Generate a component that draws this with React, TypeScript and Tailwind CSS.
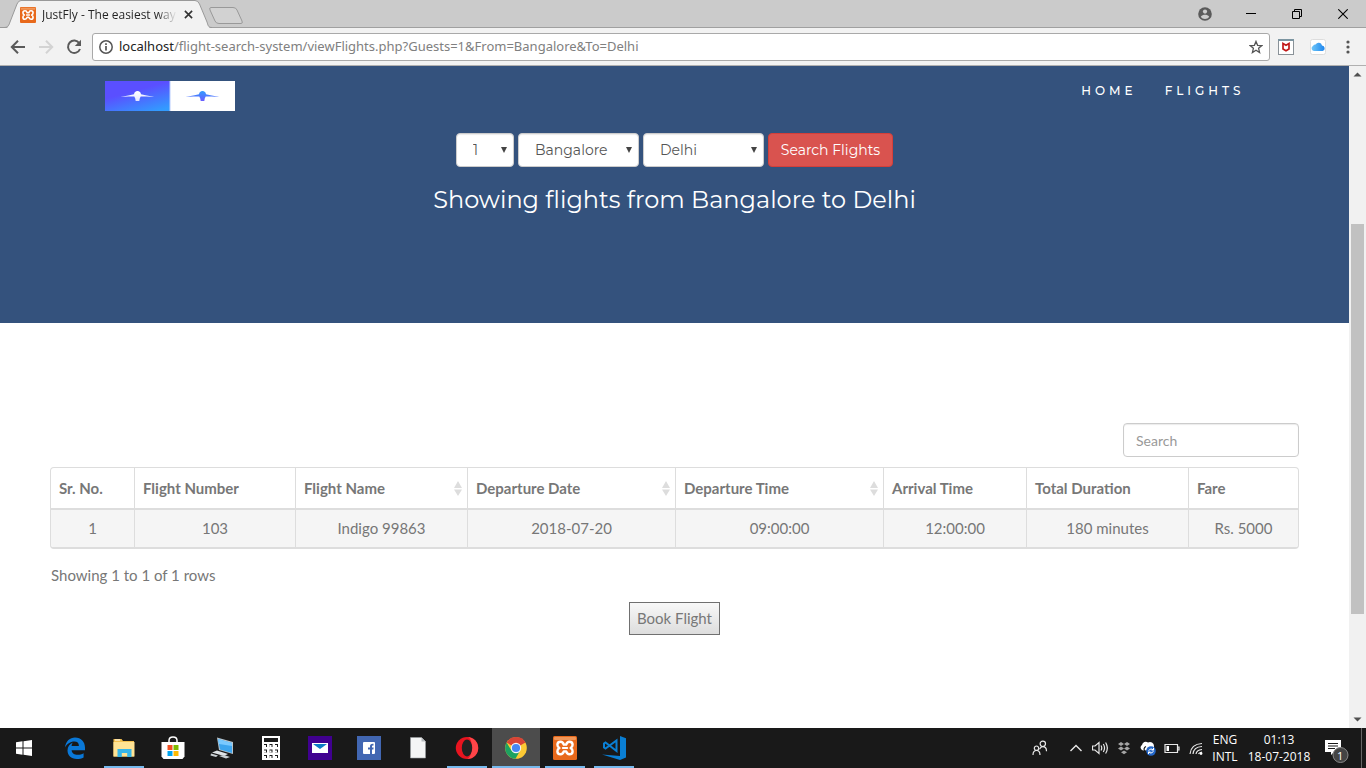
import React, { useState } from "react";
import type { ReactNode } from "react";

const HEAD = "font-['Montserrat','Inter',sans-serif]";

function XamppIcon({ className }: { className: string }) {
  return (
    <svg viewBox="0 0 24 24" className={className} aria-hidden="true">
      <rect width="24" height="24" rx="1.5" fill="#e8691b" />
      <rect x="1" y="1" width="22" height="3" rx="1" fill="#f0975a" />
      <path
        d="M7.600 5.700C9.500 5.700 10.300 7 10.800 8.600H13.200C13.700 7 14.500 5.700 16.400 5.700C18.300 5.700 19.600 7 19.600 8.800C19.600 10.300 18.700 11.400 17.600 12C18.700 12.600 19.600 13.700 19.600 15.200C19.600 17 18.300 18.300 16.400 18.300C14.500 18.300 13.700 17 13.200 15.400H10.800C10.300 17 9.500 18.300 7.600 18.300C5.700 18.300 4.400 17 4.400 15.200C4.400 13.700 5.300 12.600 6.400 12C5.300 11.400 4.400 10.300 4.400 8.800C4.400 7 5.700 5.700 7.600 5.700z"
        fill="none"
        stroke="#fff"
        strokeWidth="2.400"
        strokeLinejoin="round"
      />
      <path d="M9.800 12h4.400" stroke="#fff" strokeWidth="2" strokeLinecap="round" />
    </svg>
  );
}

function WindowButton({ label, children }: { label: string; children: ReactNode }) {
  return (
    <button aria-label={label} className="flex h-7 w-[46px] items-center justify-center text-black">
      {children}
    </button>
  );
}

function TabStrip() {
  return (
    <header className="flex h-7 shrink-0 items-start bg-[#cbcbcb] shadow-[inset_0_-1px_0_#a0a0a0]">
      <div className="relative h-7 w-[212px] shrink-0">
        <svg viewBox="0 0 212 28" className="absolute inset-0 h-7 w-[212px]" aria-hidden="true">
          <path d="M5 28.500C9 28 9 25 10 22L17 4Q18.500.500 21 .500H195Q198 .500 199.500 4L207 22C208 25 208 28 212 28.500z" fill="#f2f2f2" />
          <path d="M0 27.500H4C8 27.500 9 25 10 22L17 4Q18.500.500 21 .500H195Q198 .500 199.500 4L207 22C208 25 208 27.500 212 27.500" fill="none" stroke="#999" />
        </svg>
        <div className="relative flex h-7 items-center pt-px pl-5 pr-4">
          <XamppIcon className="h-4 w-4 shrink-0" />
          <span className="ml-[6px] w-[136px] overflow-hidden bg-linear-to-r from-[#222] from-85% to-transparent bg-clip-text font-['Segoe_UI','Open_Sans',sans-serif] text-xs whitespace-nowrap text-transparent">
            JustFly - The easiest way t
          </span>
          <button aria-label="Close tab" className="flex h-4 w-4 items-center justify-center ml-[3px]">
            <svg viewBox="0 0 10 10" className="h-[9px] w-[9px]">
              <path d="M1 1l8 8M9 1l-8 8" stroke="#333" strokeWidth="1.800" />
            </svg>
          </button>
        </div>
      </div>
      <button aria-label="New tab" className="-ml-1 mt-[6px]">
        <svg viewBox="0 0 36 19" className="h-[19px] w-9">
          <path d="M3 1.500H25Q28 1.500 29 4L34 15Q35 17.500 33 17.500H11Q8 17.500 7 15L2 4Q1 1.500 3 1.500z" fill="#d2d2d2" stroke="#999" />
        </svg>
      </button>
      <div className="ml-auto flex">
        <WindowButton label="Profile">
          <svg viewBox="0 0 14 14" className="h-[14px] w-[14px]">
            <circle cx="7" cy="7" r="6.800" fill="#5a5a5a" />
            <circle cx="7" cy="4.600" r="2.100" fill="#cbcbcb" />
            <path d="M2.800 9.800C3.800 8.300 5.400 7.800 7 7.800s3.200.5 4.200 2C10.200 11.300 8.700 12 7 12s-3.200-.7-4.200-2.200z" fill="#cbcbcb" />
          </svg>
        </WindowButton>
        <WindowButton label="Minimise">
          <svg viewBox="0 0 10 10" className="h-[10px] w-[10px]">
            <path d="M0 4.500h10" stroke="#000" />
          </svg>
        </WindowButton>
        <WindowButton label="Restore">
          <svg viewBox="0 0 10 10" className="h-[10px] w-[10px]">
            <path d="M.5 2.500h7v7h-7zM2.500 2.500v-2h7v7h-2" fill="none" stroke="#000" />
          </svg>
        </WindowButton>
        <WindowButton label="Close">
          <svg viewBox="0 0 10 10" className="h-[10px] w-[10px]">
            <path d="M.3.300l9.400 9.400M9.700.300L.3 9.700" stroke="#000" strokeWidth="1.100" />
          </svg>
        </WindowButton>
      </div>
    </header>
  );
}

function Toolbar() {
  return (
    <div className="flex h-[38px] shrink-0 items-center border-b border-[#b0b0b0] bg-[#f2f2f2] px-[10px]">
      <button aria-label="Back" className="mr-3 h-4 w-4">
        <svg viewBox="0 0 16 16" className="h-4 w-4" fill="none" stroke="#5a5a5a" strokeWidth="2">
          <path d="M15 8H2M8 1.800L1.800 8 8 14.200" />
        </svg>
      </button>
      <button aria-label="Forward" className="mr-3 h-4 w-4">
        <svg viewBox="0 0 16 16" className="h-4 w-4" fill="none" stroke="#d3d3d3" strokeWidth="2">
          <path d="M1 8h13M8 1.800L14.200 8 8 14.200" />
        </svg>
      </button>
      <button aria-label="Reload" className="mr-[10px] h-4 w-4">
        <svg viewBox="0 0 16 16" className="h-4 w-4">
          <path d="M13.300 4.200A6.200 6.200 0 1 0 14 10" fill="none" stroke="#5a5a5a" strokeWidth="2" />
          <path d="M15 .800V7H8.800z" fill="#5a5a5a" />
        </svg>
      </button>
      <div className="flex h-7 flex-1 items-center rounded-[3px] border border-[#a9a9a9] bg-white px-[6px]">
        <svg viewBox="0 0 14 14" className="mr-[6px] h-[14px] w-[14px]" aria-hidden="true">
          <circle cx="7" cy="7" r="6.200" fill="none" stroke="#555" strokeWidth="1.500" />
          <path d="M7 6v4.600M7 3.300v1.700" stroke="#555" strokeWidth="1.700" />
        </svg>
        <a
          href="#top"
          className="font-['Segoe_UI','Noto_Sans',sans-serif] text-[13px] whitespace-nowrap text-[#808080]"
        >
          <span className="text-[#222]">localhost</span>
          /flight-search-system/viewFlights.php?Guests=1&amp;From=Bangalore&amp;To=Delhi
        </a>
        <button aria-label="Bookmark" className="ml-auto h-[14px] w-[14px]">
          <svg viewBox="0 0 14 14" className="h-[14px] w-[14px]">
            <path d="M7 1.400l1.600 3.900 4.200.3-3.200 2.700 1 4.200L7 10.200l-3.600 2.300 1-4.200L1.200 5.600l4.200-.3z" fill="none" stroke="#555" strokeWidth="1.300" />
          </svg>
        </button>
      </div>
      <button aria-label="McAfee" className="ml-2 h-4 w-4">
        <svg viewBox="0 0 16 16" className="h-4 w-4">
          <rect x=".5" y=".5" width="15" height="15" fill="#fff" stroke="#8a9298" />
          <path d="M0 0h16v2H0z" fill="#7c95a1" />
          <path d="M5 4.500v5.500l3 1.800 3-1.800V4.500L8 6.300z" fill="none" stroke="#c01818" strokeWidth="1.700" />
        </svg>
      </button>
      <button aria-label="iCloud" className="ml-4 h-4 w-4">
        <svg viewBox="0 0 16 16" className="h-4 w-4">
          <defs>
            <linearGradient id="cloud" x1="0" x2="1">
              <stop stopColor="#6ec6f8" />
              <stop offset="1" stopColor="#1e86ee" />
            </linearGradient>
          </defs>
          <rect x=".5" y=".5" width="15" height="15" rx="2" fill="#fff" stroke="#ddd" />
          <path d="M3.800 12a2.600 2.600 0 0 1-.8-4.900A2.300 2.300 0 0 1 5.600 5.500 3.500 3.500 0 0 1 12 6.500a2.800 2.800 0 0 1 .6 5.500z" fill="url(#cloud)" />
        </svg>
      </button>
      <button aria-label="Menu" className="ml-[14px] flex h-4 w-4 items-center justify-center">
        <svg viewBox="0 0 4 14" className="h-[14px] w-1" fill="#555">
          <circle cx="2" cy="2" r="1.600" />
          <circle cx="2" cy="7" r="1.600" />
          <circle cx="2" cy="12" r="1.600" />
        </svg>
      </button>
    </div>
  );
}

function Bird({ id, x, from, to }: { id: string; x: number; from: string; to: string }) {
  return (
    <g transform={`translate(${x} 0)`}>
      <defs>
        <linearGradient id={id} x1="0" x2="0" y1="0" y2="1">
          <stop stopColor={from} />
          <stop offset="1" stopColor={to} />
        </linearGradient>
      </defs>
      <path
        d="M-17 16L-8 14.200L-3.500 13.200Q-3 10.200 0 10Q3 10.200 3.500 13.200L8 14.200L17 16L9 15.600L3.200 15.500Q2 17 1.800 20H-1.800Q-2 17-3.200 15.500L-9 15.600z"
        fill={`url(#${id})`}
      />
    </g>
  );
}

function Logo() {
  return (
    <svg viewBox="0 0 130 30" className="h-[30px] w-[130px]" role="img" aria-label="JustFly">
      <defs>
        <linearGradient id="logo-bg" x1=".2" y1="0" x2=".8" y2="1">
          <stop offset=".35" stopColor="#5a4fff" />
          <stop offset="1" stopColor="#329bff" />
        </linearGradient>
      </defs>
      <rect width="65" height="30" fill="url(#logo-bg)" />
      <rect x="65" width="65" height="30" fill="#fff" />
      <path d="M65 0v30" stroke="#b9cdfd" />
      <Bird id="bird-a" x={32.5} from="#ffffff" to="#e6e5ff" />
      <Bird id="bird-b" x={97.5} from="#329bff" to="#6a5cff" />
    </svg>
  );
}

function Picker({ label, options, size }: { label: string; options: string[]; size: string }) {
  return (
    <div className={`relative ${size}`}>
      <select
        aria-label={label}
        className="h-[34px] w-full appearance-none rounded-sm border border-[#ccc] bg-white pr-6 pl-4 text-sm text-[#555] shadow-[inset_0_1px_1px_rgba(0,0,0,0.08)]"
      >
        {options.map((o) => (
          <option key={o}>{o}</option>
        ))}
      </select>
      <svg viewBox="0 0 6 6" className="pointer-events-none absolute top-[14px] right-[7px] h-[6px] w-[6px]">
        <path d="M0 0h6L3 6z" fill="#444" />
      </svg>
    </div>
  );
}

function Hero() {
  return (
    <section className={`bg-[#34527d] pb-[107px] text-white ${HEAD}`}>
      <nav className="mx-auto flex max-w-[1170px] items-start justify-between px-[15px] pt-[15px]">
        <a href="#home">
          <Logo />
        </a>
        <div className="flex gap-7 text-xs leading-5 font-medium tracking-[4px]">
          <a href="#home">HOME</a>
          <a href="#flights">FLIGHTS</a>
        </div>
      </nav>
      <form className="mt-[22px] flex justify-center gap-1" onSubmit={(e) => e.preventDefault()}>
        <Picker label="Guests" options={["1", "2", "3"]} size="w-[58px]" />
        <Picker label="From" options={["Bangalore", "Delhi"]} size="w-[121px]" />
        <Picker label="To" options={["Delhi", "Bangalore"]} size="w-[121px]" />
        <button className="h-[34px] w-[125px] rounded-sm border border-[#d43f3a] bg-[#d9534f] text-sm whitespace-nowrap">
          Search Flights
        </button>
      </form>
      <h1 className="mt-4 text-center text-2xl leading-[33px]">Showing flights from Bangalore to Delhi</h1>
    </section>
  );
}

const COLUMNS = [
  { title: "Sr. No.", value: "1", width: "w-[84px]" },
  { title: "Flight Number", value: "103", width: "w-[161px]" },
  { title: "Flight Name", value: "Indigo 99863", width: "w-[172px]", sort: true },
  { title: "Departure Date", value: "2018-07-20", width: "w-[208px]", sort: true },
  { title: "Departure Time", value: "09:00:00", width: "w-[208px]", sort: true },
  { title: "Arrival Time", value: "12:00:00", width: "w-[143px]" },
  { title: "Total Duration", value: "180 minutes", width: "w-[162px]" },
  { title: "Fare", value: "Rs. 5000", width: "w-[109px]" },
];

function Results() {
  const [query, setQuery] = useState("");
  return (
    <section className="flex flex-col px-[50px] pt-[100px] font-['Lato',sans-serif] text-[15px] text-[#777]">
      <input
        aria-label="Search"
        placeholder="Search"
        value={query}
        onChange={(e) => setQuery(e.target.value)}
        className="h-[34px] w-44 self-end rounded-sm border border-[#ccc] px-3 text-sm shadow-[inset_0_1px_1px_rgba(0,0,0,0.08)] placeholder:text-[#999]"
      />
      <div className="mt-[10px] overflow-hidden rounded-sm border border-b-2 border-[#ddd]">
        <table className="w-full table-fixed border-separate border-spacing-0">
          <thead>
            <tr>
              {COLUMNS.map((c) => (
                <th
                  key={c.title}
                  className={`h-[42px] border-r border-b-2 border-[#ddd] px-2 text-left font-bold last:border-r-0 ${c.width}`}
                >
                  <div className="-mr-[3px] flex items-center justify-between whitespace-nowrap">
                    {c.title}
                    {c.sort && (
                      <svg viewBox="0 0 8 15" className="h-[15px] w-2" fill="#ddd" aria-hidden="true">
                        <path d="M4 0l4 7H0zM0 8.500h8L4 15z" />
                      </svg>
                    )}
                  </div>
                </th>
              ))}
            </tr>
          </thead>
          <tbody>
            <tr className="bg-[#f5f5f5]">
              {COLUMNS.map((c) => (
                <td key={c.title} className="h-[37px] border-r border-[#ddd] px-2 text-center last:border-r-0">
                  {c.value}
                </td>
              ))}
            </tr>
          </tbody>
        </table>
      </div>
      <p className="mt-4 pl-px leading-5">Showing 1 to 1 of 1 rows</p>
      <button className="mt-[17px] h-[33px] self-center border border-[#707070] bg-linear-to-b from-[#f8f8f8] to-[#dddddd] px-[7px]">
        Book Flight
      </button>
    </section>
  );
}

function Scrollbar() {
  return (
    <div className="flex w-[17px] shrink-0 flex-col items-center bg-[#f1f1f1]" aria-hidden="true">
      <svg viewBox="0 0 17 17" className="h-[17px] w-[17px] shrink-0">
        <path d="M8.500 6.500l4 4h-8z" fill="#505050" />
      </svg>
      <div className="grow-[141]" />
      <div className="w-[13px] grow-[390] bg-[#c1c1c1]" />
      <div className="grow-[97]" />
      <svg viewBox="0 0 17 17" className="h-[17px] w-[17px] shrink-0">
        <path d="M8.500 10.500l4-4h-8z" fill="#505050" />
      </svg>
    </div>
  );
}

const APPS: { name: string; bar?: boolean; active?: boolean; icon: ReactNode }[] = [
  {
    name: "Edge",
    icon: (
      <path
        d="M2 11.500C2.800 5 7 1.500 12 1.500c6.200 0 10 4.500 10 10v2.700H8.600c.2 3.200 3 4.600 6 4.600 2.300 0 4.300-.6 6-1.600v4.200c-2 1-4.200 1.500-6.700 1.500-6 0-9.400-3.700-9.400-8.500 0-3.700 2.200-6.500 5.600-7.800C8.900 7.700 8.700 9 8.600 10h7.300c0-2.900-1.600-4.400-4.600-4.400C7.300 5.600 4 8.200 2 11.500z"
        fill="#0a78d7"
      />
    ),
  },
  {
    name: "File Explorer",
    bar: true,
    icon: (
      <>
        <path d="M1.500 3h8l1.500 2h11v15.500H1.500z" fill="#f3c04f" />
        <path d="M1.500 6h21v14.500h-21z" fill="#ffe394" />
        <path d="M3 4h5" stroke="#fff" strokeWidth="1" />
        <path d="M5.500 21v-8h14v8h-4.300v-4h-5.400v4z" fill="#38b6e8" />
      </>
    ),
  },
  {
    name: "Store",
    icon: (
      <>
        <path d="M8 7V4.500C8 1.500 10 1 12 1s4 .5 4 3.500V7" fill="none" stroke="#fff" strokeWidth="1.500" />
        <path d="M.5 6h23v14.500l-2 2.500h-19l-2-2.500z" fill="#fff" />
        <path d="M6.500 9h5v5h-5z" fill="#f25022" />
        <path d="M12.500 9h5v5h-5z" fill="#7fba00" />
        <path d="M6.500 15h5v5h-5z" fill="#00a4ef" />
        <path d="M12.500 15h5v5h-5z" fill="#ffb900" />
      </>
    ),
  },
  {
    name: "This PC",
    icon: (
      <>
        <path d="M7 1.500l16 4.500v12L9 14z" fill="#b8c4cc" />
        <path d="M8 3l14 4v10L10 13.500z" fill="#3da5ee" />
        <path d="M8 3l14 4v3L9 8z" fill="#79c9ff" />
        <path d="M7 14.500l11 3.500-4 2-12-3.500z" fill="#dfe3e6" />
        <path d="M1 17.500l7 2-2 1.500-5.500-1.500zM9 20l5-1 6 2-4 1.500z" fill="#c9cfd3" />
      </>
    ),
  },
  {
    name: "Calculator",
    icon: (
      <>
        <path d="M3 0h18v24H3z" fill="#fff" />
        <path d="M5 2h14v4H5zM5 8h3v3H5zM10.500 8h3v3h-3zM16 8h3v3h-3zM5 13.500h3v3H5zM10.500 13.500h3v3h-3zM16 13.500h3v3h-3zM5 19h3v3H5zM10.500 19h3v3h-3zM16 19h3v3h-3z" fill="#1a1a1a" />
        <path d="M5 9h2v2H5zM10.500 9h2v2h-2zM16 9h2v2h-2zM5 14.500h2v2H5zM10.500 14.500h2v2h-2zM16 14.500h2v2h-2zM5 20h2v2H5zM10.500 20h2v2h-2zM16 20h2v2h-2z" fill="#fff" />
      </>
    ),
  },
  {
    name: "Mail",
    icon: (
      <>
        <path d="M0 0h24v24H0z" fill="#400090" />
        <path d="M4 7h16v10H4z" fill="#fff" />
        <path d="M5 8h14l-7 5z" fill="#0a7cc4" />
      </>
    ),
  },
  {
    name: "Facebook",
    icon: (
      <>
        <path d="M0 0h24v24H0z" fill="#4267b2" />
        <rect x="6" y="6" width="12" height="12" rx="1" fill="#fff" />
        <path d="M13 18v-4.500h-2V11.500h2V10.300C13 8.500 14 7.600 16.500 7.800V9.600C15.300 9.500 15 9.800 15 10.600v.9h1.600l-.2 2H15V18z" fill="#4267b2" />
      </>
    ),
  },
  {
    name: "Document",
    icon: (
      <>
        <path d="M4.500 1.500h11l4 4v16.500h-15z" fill="#f4f5f5" stroke="#9aa0a3" strokeWidth=".600" />
        <path d="M15.500 1.500v4h4z" fill="#b5babd" />
      </>
    ),
  },
  {
    name: "Opera",
    bar: true,
    icon: (
      <>
        <ellipse cx="12" cy="12" rx="11.200" ry="11" fill="#e8141f" />
        <path d="M12 1c7 0 11.200 5 11.200 11S19 23 12 23c6-1 7-22 0-22z" fill="#ff4548" />
        <ellipse cx="12" cy="12" rx="5.200" ry="8.500" fill="#222" />
      </>
    ),
  },
  {
    name: "Chrome",
    bar: true,
    active: true,
    icon: (
      <>
        <circle cx="12" cy="12" r="10.800" fill="#fcc934" />
        <path d="M12 12L2.600 6.600A10.800 10.800 0 0 1 21.400 6.600z" fill="#d84437" />
        <path d="M12 12L7.500 14.600 2.600 6.600A10.800 10.800 0 0 0 11.500 22.800l4.500-8z" fill="#1da261" />
        <path d="M12 7h9.600L21.300 6.500 12 4z" fill="#d84437" />
        <circle cx="12" cy="12" r="5.200" fill="#f5f5f5" />
        <circle cx="12" cy="12" r="4.100" fill="#4587f3" />
      </>
    ),
  },
  { name: "XAMPP", bar: true, icon: null },
  {
    name: "Visual Studio Code",
    bar: true,
    icon: (
      <>
        <path d="M18 0l6 2.300v19.200L18 24 0 18.500l18 1.500z" fill="#0a7fd4" />
        <path d="M14.500 4.500v10.500L3.500 6.500 2 7.500v4l1.500 1z" fill="none" stroke="#0a7fd4" strokeWidth="2" />
      </>
    ),
  },
];

function TrayIcon({ label, children }: { label: string; children: ReactNode }) {
  return (
    <button aria-label={label} className="flex h-10 w-6 items-center justify-center">
      <svg viewBox="0 0 16 16" className="h-4 w-4" fill="none" stroke="#e8e8e8" strokeWidth="1.200">
        {children}
      </svg>
    </button>
  );
}

function Taskbar() {
  return (
    <footer className="flex h-10 shrink-0 items-stretch bg-[#191919] font-['Segoe_UI','Open_Sans',sans-serif] text-xs text-white">
      <button aria-label="Start" className="mr-[3px] flex w-12 items-center justify-center">
        <svg viewBox="0 0 16 16" className="h-4 w-4" fill="#fff">
          <path d="M0 2.200L6.500 1.300V7.500H0zM7.500 1.200L16 0v7.500H7.500zM0 8.500h6.500v6.200L0 13.800zM7.500 8.500H16V16l-8.500-1.200z" />
        </svg>
      </button>
      <div className="flex gap-px">
        {APPS.map((a) => (
          <button
            key={a.name}
            aria-label={a.name}
            className={`flex w-12 flex-col items-center justify-between pt-2 ${a.active ? "bg-[#4c4c4c]" : ""}`}
          >
            {a.icon ? (
              <svg viewBox="0 0 24 24" className="h-6 w-6">
                {a.icon}
              </svg>
            ) : (
              <XamppIcon className="h-6 w-6" />
            )}
            {a.bar && <span className={`h-[2px] bg-[#76b9ed] ${a.active ? "w-12" : "w-10"}`} />}
          </button>
        ))}
      </div>
      <div className="ml-auto flex items-center">
        <div className="mr-3">
          <TrayIcon label="People">
            <circle cx="10.800" cy="3.800" r="2.700" />
            <circle cx="4.500" cy="8.200" r="2.200" />
            <path d="M1 15c0-3 1.500-4.500 3.500-4.500S8 12 8 15M7.500 9.200c.8-1.600 1.900-2.500 3.300-2.500 2.200 0 3.700 1.500 3.700 4.500" />
          </TrayIcon>
        </div>
        <TrayIcon label="Show hidden icons">
          <path d="M2.500 11L8 5.500l5.500 5.500" strokeWidth="1.400" />
        </TrayIcon>
        <TrayIcon label="Volume">
          <path d="M.5 6h2.500l4-3.500v11L3 10H.5zM9 5.500q1.500 2.500 0 5M11.300 4q2.500 4 0 8M13.600 2.500q3.500 5.500 0 11" />
        </TrayIcon>
        <TrayIcon label="Dropbox">
          <path d="M5 2l3 2-3 2-3-2zM11 2l3 2-3 2-3-2zM5 6.500l3 2-3 2-3-2zM11 6.500l3 2-3 2-3-2zM8 10.500l3 1.800-3 1.900-3-1.900z" fill="#a5a5a5" stroke="none" />
        </TrayIcon>
        <TrayIcon label="OneDrive">
          <path d="M3 10.500A3 3 0 0 1 2 5a3.800 3.800 0 0 1 6-2.500A4 4 0 0 1 14 6v4z" fill="#fff" stroke="none" />
          <path d="M5 11.500A3 3 0 0 1 6 6.500" stroke="#191919" />
          <circle cx="11" cy="11" r="4.800" fill="#2266c8" stroke="none" />
          <path d="M8.500 10.500q2.500-3 5-.5M13.500 11.500q-2.500 3-5 .5M13.500 7.800V10h-2M8.500 14v-2h2" stroke="#fff" strokeWidth="1" />
        </TrayIcon>
        <TrayIcon label="Battery">
          <path d="M1 4.500h12.500v8H1zM13.500 7H15v3h-1.500" />
          <path d="M2.500 6h2.500v5H2.500z" fill="#fff" stroke="none" />
        </TrayIcon>
        <TrayIcon label="Wi-Fi">
          <path d="M2 14Q3 4 14 3.500M5 14q.5-7 9-7.500M8 14q.5-4 6-4.500M10.500 14q.5-1.500 3.500-2" />
          <circle cx="13" cy="13.500" r="1.400" fill="#fff" stroke="none" />
        </TrayIcon>
        <div className="ml-px w-8 text-center leading-[17px] whitespace-nowrap">
          ENG
          <br />
          INTL
        </div>
        <div className="ml-[6px] w-[64px] text-center leading-[17px] whitespace-nowrap">
          01:13
          <br />
          18-07-2018
        </div>
        <button aria-label="Notifications" className="relative ml-[14px] h-10 w-6">
          <svg viewBox="0 0 24 24" className="absolute top-[11px] left-0 h-6 w-6">
            <path d="M0 1h16v12H9l-3 3v-3H0z" fill="#fff" />
            <path d="M3 4.500h10M3 7h10M3 9.500h7" stroke="#191919" />
            <circle cx="15.500" cy="16" r="7.500" fill="#444" stroke="#888" />
          </svg>
          <span className="absolute top-5 left-3 text-[11px] leading-[15px]">1</span>
        </button>
        <div className="mr-1 ml-[12px] h-10 w-px bg-[#666]" />
      </div>
    </footer>
  );
}

export default function App() {
  return (
    <div className="flex h-screen flex-col overflow-hidden bg-white">
      <TabStrip />
      <Toolbar />
      <div className="flex min-h-0 flex-1">
        <main className="min-w-0 flex-1 overflow-hidden">
          <Hero />
          <Results />
        </main>
        <Scrollbar />
      </div>
      <Taskbar />
    </div>
  );
}
